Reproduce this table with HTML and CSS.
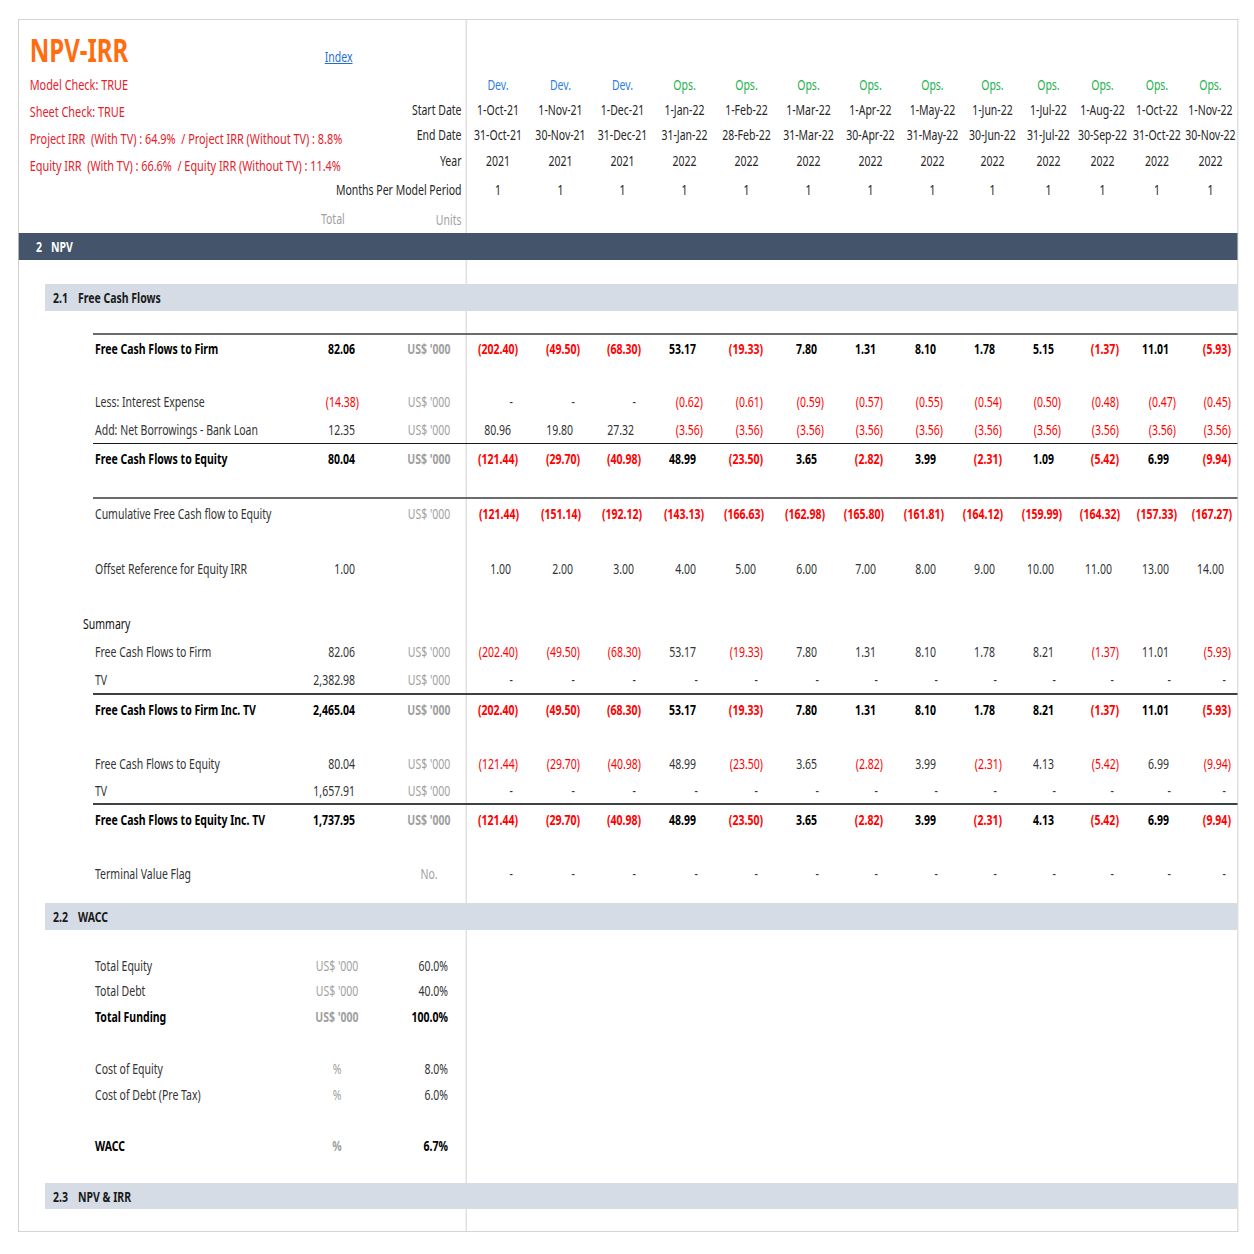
FILE: index.html
```html
<!DOCTYPE html>
<html lang="en">
<head>
<meta charset="utf-8">
<title>NPV-IRR</title>
<link rel="stylesheet" href="styles.css">
</head>
<body>
<div class="page">
<div class="sheet">
  <div class="head">
    <div class="hleft">
      <div class="colA">
        <div class="titlerow"><span class="title">NPV-IRR</span><a class="index" href="#">Index</a></div>
        <div class="chk">Model Check: TRUE</div>
        <div class="chk">Sheet Check: TRUE</div>
        <div class="chk">Project IRR  (With TV) : 64.9%  / Project IRR (Without TV) : 8.8%</div>
        <div class="chk">Equity IRR  (With TV) : 66.6%  / Equity IRR (Without TV) : 11.4%</div>
        <div class="totalhead">Total</div>
      </div>
      <div class="colB">
        <div class="lab h24">Start Date</div>
        <div class="lab h26">End Date</div>
        <div class="lab h26">Year</div>
        <div class="lab h32">Months Per Model Period</div>
        <div class="lab h28 grey">Units</div>
      </div>
    </div>
    <div class="hper">
      <span class="dev">Dev.</span><span class="dev">Dev.</span><span class="dev">Dev.</span><span class="ops">Ops.</span><span class="ops">Ops.</span><span class="ops">Ops.</span><span class="ops">Ops.</span><span class="ops">Ops.</span><span class="ops">Ops.</span><span class="ops">Ops.</span><span class="ops">Ops.</span><span class="ops">Ops.</span><span class="ops">Ops.</span>
      <span>1-Oct-21</span><span>1-Nov-21</span><span>1-Dec-21</span><span>1-Jan-22</span><span>1-Feb-22</span><span>1-Mar-22</span><span>1-Apr-22</span><span>1-May-22</span><span>1-Jun-22</span><span>1-Jul-22</span><span>1-Aug-22</span><span>1-Oct-22</span><span>1-Nov-22</span>
      <span>31-Oct-21</span><span>30-Nov-21</span><span>31-Dec-21</span><span>31-Jan-22</span><span>28-Feb-22</span><span>31-Mar-22</span><span>30-Apr-22</span><span>31-May-22</span><span>30-Jun-22</span><span>31-Jul-22</span><span>30-Sep-22</span><span>31-Oct-22</span><span>30-Nov-22</span>
      <span>2021</span><span>2021</span><span>2021</span><span>2022</span><span>2022</span><span>2022</span><span>2022</span><span>2022</span><span>2022</span><span>2022</span><span>2022</span><span>2022</span><span>2022</span>
      <span>1</span><span>1</span><span>1</span><span>1</span><span>1</span><span>1</span><span>1</span><span>1</span><span>1</span><span>1</span><span>1</span><span>1</span><span>1</span>
    </div>
  </div>

  <div class="band"><span class="num">2</span>NPV</div>
  <div class="sp h24"></div>
  <div class="sub"><span class="num">2.1</span>Free Cash Flows</div>
  <div class="sp h22"></div>

  <div class="row b t-heavy h28">
    <div class="lbl">Free Cash Flows to Firm</div>
    <div class="tot p">82.06</div>
    <div class="unit">US$ '000</div>
    <div class="per"><span class="n">(202.40)</span><span class="n">(49.50)</span><span class="n">(68.30)</span><span class="p">53.17</span><span class="n">(19.33)</span><span class="p">7.80</span><span class="p">1.31</span><span class="p">8.10</span><span class="p">1.78</span><span class="p">5.15</span><span class="n">(1.37)</span><span class="p">11.01</span><span class="n">(5.93)</span></div>
  </div>
  <div class="sp h27"></div>
  <div class="row h27">
    <div class="lbl">Less: Interest Expense</div>
    <div class="tot n">(14.38)</div>
    <div class="unit">US$ '000</div>
    <div class="per"><span class="d">-</span><span class="d">-</span><span class="d">-</span><span class="n">(0.62)</span><span class="n">(0.61)</span><span class="n">(0.59)</span><span class="n">(0.57)</span><span class="n">(0.55)</span><span class="n">(0.54)</span><span class="n">(0.50)</span><span class="n">(0.48)</span><span class="n">(0.47)</span><span class="n">(0.45)</span></div>
  </div>
  <div class="row h28">
    <div class="lbl">Add: Net Borrowings - Bank Loan</div>
    <div class="tot p">12.35</div>
    <div class="unit">US$ '000</div>
    <div class="per"><span class="p">80.96</span><span class="p">19.80</span><span class="p">27.32</span><span class="n">(3.56)</span><span class="n">(3.56)</span><span class="n">(3.56)</span><span class="n">(3.56)</span><span class="n">(3.56)</span><span class="n">(3.56)</span><span class="n">(3.56)</span><span class="n">(3.56)</span><span class="n">(3.56)</span><span class="n">(3.56)</span></div>
  </div>
  <div class="row b t-thin h29">
    <div class="lbl">Free Cash Flows to Equity</div>
    <div class="tot p">80.04</div>
    <div class="unit">US$ '000</div>
    <div class="per"><span class="n">(121.44)</span><span class="n">(29.70)</span><span class="n">(40.98)</span><span class="p">48.99</span><span class="n">(23.50)</span><span class="p">3.65</span><span class="n">(2.82)</span><span class="p">3.99</span><span class="n">(2.31)</span><span class="p">1.09</span><span class="n">(5.42)</span><span class="p">6.99</span><span class="n">(9.94)</span></div>
  </div>
  <div class="sp h25"></div>
  <div class="row t-heavy h30">
    <div class="lbl">Cumulative Free Cash flow to Equity</div>
    <div class="tot"></div>
    <div class="unit">US$ '000</div>
    <div class="per bv"><span class="n">(121.44)</span><span class="n">(151.14)</span><span class="n">(192.12)</span><span class="n">(143.13)</span><span class="n">(166.63)</span><span class="n">(162.98)</span><span class="n">(165.80)</span><span class="n">(161.81)</span><span class="n">(164.12)</span><span class="n">(159.99)</span><span class="n">(164.32)</span><span class="n">(157.33)</span><span class="n">(167.27)</span></div>
  </div>
  <div class="sp h27"></div>
  <div class="row h28">
    <div class="lbl">Offset Reference for Equity IRR</div>
    <div class="tot p">1.00</div>
    <div class="unit"></div>
    <div class="per"><span class="p">1.00</span><span class="p">2.00</span><span class="p">3.00</span><span class="p">4.00</span><span class="p">5.00</span><span class="p">6.00</span><span class="p">7.00</span><span class="p">8.00</span><span class="p">9.00</span><span class="p">10.00</span><span class="p">11.00</span><span class="p">13.00</span><span class="p">14.00</span></div>
  </div>
  <div class="sp h27"></div>
  <div class="sumlbl">Summary</div>
  <div class="row h28">
    <div class="lbl">Free Cash Flows to Firm</div>
    <div class="tot p">82.06</div>
    <div class="unit">US$ '000</div>
    <div class="per"><span class="n">(202.40)</span><span class="n">(49.50)</span><span class="n">(68.30)</span><span class="p">53.17</span><span class="n">(19.33)</span><span class="p">7.80</span><span class="p">1.31</span><span class="p">8.10</span><span class="p">1.78</span><span class="p">8.21</span><span class="n">(1.37)</span><span class="p">11.01</span><span class="n">(5.93)</span></div>
  </div>
  <div class="row h28">
    <div class="lbl">TV</div>
    <div class="tot p">2,382.98</div>
    <div class="unit">US$ '000</div>
    <div class="per"><span class="d">-</span><span class="d">-</span><span class="d">-</span><span class="d">-</span><span class="d">-</span><span class="d">-</span><span class="d">-</span><span class="d">-</span><span class="d">-</span><span class="d">-</span><span class="d">-</span><span class="d">-</span><span class="d">-</span></div>
  </div>
  <div class="row b t-dark h31">
    <div class="lbl">Free Cash Flows to Firm Inc. TV</div>
    <div class="tot p">2,465.04</div>
    <div class="unit">US$ '000</div>
    <div class="per"><span class="n">(202.40)</span><span class="n">(49.50)</span><span class="n">(68.30)</span><span class="p">53.17</span><span class="n">(19.33)</span><span class="p">7.80</span><span class="p">1.31</span><span class="p">8.10</span><span class="p">1.78</span><span class="p">8.21</span><span class="n">(1.37)</span><span class="p">11.01</span><span class="n">(5.93)</span></div>
  </div>
  <div class="sp h25"></div>
  <div class="row h28">
    <div class="lbl">Free Cash Flows to Equity</div>
    <div class="tot p">80.04</div>
    <div class="unit">US$ '000</div>
    <div class="per"><span class="n">(121.44)</span><span class="n">(29.70)</span><span class="n">(40.98)</span><span class="p">48.99</span><span class="n">(23.50)</span><span class="p">3.65</span><span class="n">(2.82)</span><span class="p">3.99</span><span class="n">(2.31)</span><span class="p">4.13</span><span class="n">(5.42)</span><span class="p">6.99</span><span class="n">(9.94)</span></div>
  </div>
  <div class="row h26">
    <div class="lbl">TV</div>
    <div class="tot p">1,657.91</div>
    <div class="unit">US$ '000</div>
    <div class="per"><span class="d">-</span><span class="d">-</span><span class="d">-</span><span class="d">-</span><span class="d">-</span><span class="d">-</span><span class="d">-</span><span class="d">-</span><span class="d">-</span><span class="d">-</span><span class="d">-</span><span class="d">-</span><span class="d">-</span></div>
  </div>
  <div class="row b t-dark h31">
    <div class="lbl">Free Cash Flows to Equity Inc. TV</div>
    <div class="tot p">1,737.95</div>
    <div class="unit">US$ '000</div>
    <div class="per"><span class="n">(121.44)</span><span class="n">(29.70)</span><span class="n">(40.98)</span><span class="p">48.99</span><span class="n">(23.50)</span><span class="p">3.65</span><span class="n">(2.82)</span><span class="p">3.99</span><span class="n">(2.31)</span><span class="p">4.13</span><span class="n">(5.42)</span><span class="p">6.99</span><span class="n">(9.94)</span></div>
  </div>
  <div class="sp h25"></div>
  <div class="row h28">
    <div class="lbl">Terminal Value Flag</div>
    <div class="tot"></div>
    <div class="unit">No.</div>
    <div class="per"><span class="d">-</span><span class="d">-</span><span class="d">-</span><span class="d">-</span><span class="d">-</span><span class="d">-</span><span class="d">-</span><span class="d">-</span><span class="d">-</span><span class="d">-</span><span class="d">-</span><span class="d">-</span><span class="d">-</span></div>
  </div>
  <div class="sp h16"></div>
  <div class="sub"><span class="num">2.2</span>WACC</div>
  <div class="sp h22"></div>

  <div class="wrow h26"><div class="lbl">Total Equity</div><div class="unit">US$ '000</div><div class="wval">60.0%</div></div>
  <div class="wrow h25"><div class="lbl">Total Debt</div><div class="unit">US$ '000</div><div class="wval">40.0%</div></div>
  <div class="wrow b h26"><div class="lbl">Total Funding</div><div class="unit">US$ '000</div><div class="wval">100.0%</div></div>
  <div class="sp h26"></div>
  <div class="wrow h26"><div class="lbl">Cost of Equity</div><div class="unit">%</div><div class="wval">8.0%</div></div>
  <div class="wrow h26"><div class="lbl">Cost of Debt (Pre Tax)</div><div class="unit">%</div><div class="wval">6.0%</div></div>
  <div class="sp h25"></div>
  <div class="wrow b h26"><div class="lbl">WACC</div><div class="unit">%</div><div class="wval">6.7%</div></div>
  <div class="sp h25"></div>
  <div class="sub h26"><span class="num">2.3</span>NPV &amp; IRR</div>
  <div class="sp h22"></div>
</div>
</div>
</body>
</html>
```

FILE: styles.css
```css
/* The sheet is laid out at natural width and then narrowed horizontally
   (scaleX .75) to reproduce the tall, condensed spreadsheet lettering. */
* { box-sizing: border-box; }
html, body { margin: 0; padding: 0; background: #ffffff; overflow: hidden; }
body {
  font-family: "Noto Sans", "Open Sans", sans-serif;
  font-size: 14px;
  color: #333333;
}

.page {
  width: 1254px;
  height: 1254px;
  overflow: hidden;
  padding-top: 19px;
}

.sheet {
  margin-left: 18px;
  width: 1627px;
  border: 1px solid #d4d4d4;
  border-left-color: #c2c2c2;
  border-right-color: #c2c2c2;
  background: linear-gradient(#c4c4c4, #c4c4c4) no-repeat 596px 0 / 1.4px 100%;
  transform: scaleX(0.75);
  transform-origin: 0 0;
}

/* ---------- header ---------- */
.head { display: flex; height: 213px; }
.hleft { width: 597px; flex: none; display: flex; }
.colA { width: 445.33px; flex: none; }
.titlerow {
  height: 51px;
  padding: 14px 0 0 14.67px;
  display: grid;
  grid-template-columns: 393.33px auto;
  align-items: baseline;
}
.title { font-size: 32px; line-height: 32px; font-weight: bold; color: #ff6d10; }
.index { color: #1f6fd0; text-decoration: underline; }
.chk {
  height: 27px;
  line-height: 26px;
  padding-left: 14.67px;
  font-size: 14.5px;
  color: #e3222b;
  white-space: pre;
}
.totalhead {
  margin-top: 26px;
  height: 28px;
  line-height: 28px;
  text-align: right;
  padding-right: 10.67px;
  color: #a0a0a0;
}
.colB { flex: 1; min-width: 0; padding: 77px 6.67px 0 0; }
.lab {
  display: flex;
  justify-content: flex-end;
  align-items: center;
  white-space: nowrap;
  color: #262626;
}
.lab.grey { color: #a0a0a0; }

.hper {
  width: 1028px;
  flex: none;
  padding-top: 51px;
  display: grid;
  grid-template-columns: 84px 82.67px 82.67px 82.67px 82.67px 82.67px 82.67px 82.67px 77.33px 72px 72px 73.33px 69.33px;
  grid-template-rows: 26px 24px 26px 26px 32px;
  align-items: center;
  justify-items: center;
  color: #262626;
  white-space: nowrap;
}
.dev { color: #2f7fd8; }
.ops { color: #22b14c; }

/* ---------- bands ---------- */
.band {
  height: 27px;
  background: #44546a;
  color: #ffffff;
  font-weight: bold;
  display: flex;
  align-items: center;
  padding-left: 23px;
}
.band .num { width: 20px; }
.sub {
  margin-left: 35px;
  height: 27px;
  background: #d6dce5;
  color: #1a1a1a;
  font-weight: bold;
  display: flex;
  align-items: center;
  padding-left: 10.67px;
}
.sub .num { width: 33.33px; }

/* ---------- rows ---------- */
.row {
  display: grid;
  grid-template-columns: 276px 121.33px 101.33px 1026.67px;
  margin-left: 99px;
  align-items: center;
}
.lbl { padding-left: 2.67px; white-space: nowrap; }
.tot { text-align: right; padding-right: 42.67px; white-space: nowrap; }
.tot.p { padding-right: 48px; }
.unit { text-align: center; color: #a0a0a0; white-space: nowrap; }
.per {
  display: grid;
  grid-template-columns: 76px 82.67px 81.33px 82.67px 80px 81.33px 78.67px 80px 78.67px 78.67px 77.33px 76px 73.33px;
  white-space: nowrap;
}
.per span { text-align: right; padding-right: 8px; }
.per .p { padding-right: 17.33px; }
.per .d { padding-right: 14.67px; }
.n { color: #ff0000; }
.b { font-weight: bold; color: #000000; }
.bv { font-weight: bold; color: #000000; }
.per.bv span { padding-right: 6.67px; }

.t-heavy { border-top: 2px solid #6b6b6b; }
.t-thin { border-top: 1px solid #1a1a1a; }
.t-dark { border-top: 2px solid #404040; }

.sumlbl {
  margin-left: 85.67px;
  height: 28px;
  display: flex;
  align-items: center;
  color: #111111;
}

.wrow {
  display: grid;
  grid-template-columns: 276px 98.67px 124px;
  margin-left: 99px;
  align-items: center;
}
.wval { text-align: right; padding-right: 25.33px; }

/* heights */
.h16 { height: 16px; }
.h22 { height: 22px; }
.h24 { height: 24px; }
.h25 { height: 25px; }
.h26 { height: 26px; }
.h27 { height: 27px; }
.h28 { height: 28px; }
.h29 { height: 29px; }
.h30 { height: 30px; }
.h31 { height: 31px; }
.h32 { height: 32px; }
```
